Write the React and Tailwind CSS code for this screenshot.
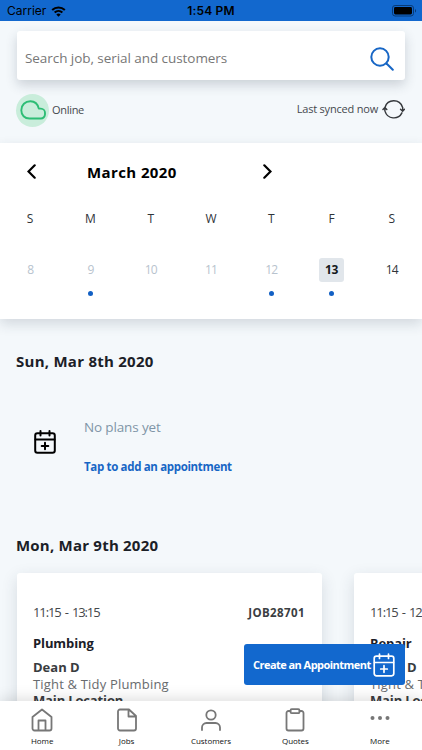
import React from "react";

const days = [
  { w: "S", d: "8" },
  { w: "M", d: "9", dot: true },
  { w: "T", d: "10" },
  { w: "W", d: "11" },
  { w: "T", d: "12", dot: true },
  { w: "F", d: "13", dot: true, today: true },
  { w: "S", d: "14", active: true },
];

function CalendarPlus({ className, strokeWidth = 2 }) {
  return (
    <svg viewBox="0 0 22 24" className={className} fill="none" stroke="currentColor" strokeWidth={strokeWidth} strokeLinecap="round" strokeLinejoin="round">
      <rect x="1.2" y="3.2" width="19.6" height="19.6" rx="2.2" />
      <path d="M1.5 9.5h19M6.5 1v4.5M15.5 1v4.5M11 12.7v6.6M7.7 16h6.6" />
    </svg>
  );
}

function StatusBar() {
  return (
    <div className="grid h-[21px] shrink-0 grid-cols-3 items-center bg-[#1268ce] px-[7px] pt-[1px] font-['Inter',sans-serif] text-black">
      <div className="flex items-center gap-[5px]">
        <span className="text-[12px] leading-none">Carrier</span>
        <svg viewBox="0 0 16 12" className="h-[11px] w-[15px]" fill="currentColor">
          <path d="M8 11.7 5.6 9.2a3.5 3.5 0 0 1 4.8 0Z" />
          <path d="M3.8 7.1a6.1 6.1 0 0 1 8.4 0M1.1 4.3a10 10 0 0 1 13.8 0" fill="none" stroke="currentColor" strokeWidth="2.2" />
        </svg>
      </div>
      <div className="text-center text-[12px] leading-none font-semibold tracking-[0.2px]">1:54 PM</div>
      <div className="flex items-center justify-end">
        <svg viewBox="0 0 25 12" className="-mr-[2px] h-[12px] w-[25px]">
          <rect x="0.5" y="0.5" width="21" height="10.5" rx="2.6" fill="none" stroke="#083a75" />
          <rect x="2" y="2" width="18" height="7.5" rx="1.4" />
          <path d="M23 4v3.6c1.4-.5 1.4-3.1 0-3.6Z" fill="#083a75" />
        </svg>
      </div>
    </div>
  );
}

function SearchCard() {
  return (
    <div className="mx-[17px] mt-[10px] flex h-[49px] shrink-0 items-center justify-between rounded-[3px] bg-white pr-[11px] pl-[8px] shadow-[0_5px_12px_rgba(40,55,75,0.2)]">
      <span className="mt-[5px] text-[13.5px] leading-[20px] tracking-[-0.06px] whitespace-nowrap text-[#777]">Search job, serial and customers</span>
      <svg viewBox="0 0 24 24" className="mt-[7px] size-[24px]" fill="none" stroke="#1766c5" strokeWidth="2" strokeLinecap="round">
        <circle cx="10" cy="10" r="8.7" />
        <path d="m16.5 16.5 6.3 6.3" />
      </svg>
    </div>
  );
}

function SyncRow() {
  return (
    <div className="mt-[14px] flex h-[33px] shrink-0 items-center justify-between pr-[17px] pl-[16px] text-[11px] leading-[16px] text-[#45494e]">
      <div className="flex items-center gap-[3px]">
        <div className="flex size-[33px] items-center justify-center rounded-full bg-[#c9eddb]">
          <svg viewBox="0 0 26 20" className="mb-[2px] h-[20px] w-[26px]" fill="none" stroke="#2dbd75" strokeWidth="1.9" strokeLinejoin="round">
            <path d="M9.500 18.500h11.300a4.200 4.200 0 0 0 4.200-4.300v-1.400a4.200 4.200 0 0 0-4.200-4.200H18.800C17.800 4.200 14.600 1.200 10.400 1.200 5.200 1.200 1.300 5.100 1.300 10.200c0 5 3.400 8.300 8.200 8.300Z" />
          </svg>
        </div>
        <span className="mb-[2px] tracking-[-0.3px]">Online</span>
      </div>
      <div className="mb-[3px] flex items-center gap-[4px]">
        <span className="tracking-[-0.2px] whitespace-nowrap">Last synced now</span>
        <svg viewBox="0 0 24 22" className="h-[22px] w-[23px]" fill="none" stroke="#35383c" strokeWidth="1.5" strokeLinecap="round" strokeLinejoin="round">
          <path d="M3 13V10.200M3.200 9.200A9.500 9.500 0 0 1 21.300 9M21.600 9.500V12.800M1 11.500l2-2 2 2M19.400 11.300l2.100 2 2-2M3.200 13.500A9.500 9.500 0 0 0 20.800 15" />
        </svg>
      </div>
    </div>
  );
}

function Calendar() {
  return (
    <div className="relative mt-[16px] flex h-[176px] shrink-0 flex-col bg-white shadow-[0_5px_12px_rgba(40,55,75,0.16)]">
      <div className="flex h-[57px] items-center pl-[27px]">
        <svg viewBox="0 0 9 15" className="h-[15px] w-[9px]" fill="none" stroke="black" strokeWidth="2.200" strokeLinecap="round">
          <path d="M7.700 1.300 1.500 7.500l6.200 6.200" />
        </svg>
        <span className="ml-[51px] w-[176px] text-[15px] leading-[20px] font-bold tracking-[0.4px] whitespace-nowrap text-black">March 2020</span>
        <svg viewBox="0 0 9 15" className="h-[15px] w-[9px]" fill="none" stroke="black" strokeWidth="2.200" strokeLinecap="round">
          <path d="m1.300 1.300 6.200 6.200-6.200 6.200" />
        </svg>
      </div>
      <div className="grid grid-cols-7 text-center text-[12px] leading-[16px]">
        {days.map((day, i) => (
          <div key={i} className="flex flex-col items-center">
            <span className="mt-[11px] text-[#2f3439]">{day.w}</span>
            <span
              className={
                day.today
                  ? "mt-[31px] flex h-[24px] w-[25px] items-center justify-center rounded-[3px] bg-[#e1e6eb] font-bold tracking-[-0.4px] text-[#15191d]"
                  : day.active
                    ? "mt-[31px] flex h-[24px] w-[25px] items-center justify-center tracking-[-0.8px] text-[#2f3439]"
                    : "mt-[31px] flex h-[24px] w-[25px] items-center justify-center tracking-[-0.9px] text-[#b8c3ce]"
              }
            >
              {day.d}
            </span>
            {day.dot && <span className="mt-[9px] size-[5px] rounded-full bg-[#1260c4]" />}
          </div>
        ))}
      </div>
    </div>
  );
}

function JobCard({ time, job, type }) {
  return (
    <div className="h-[200px] w-[305px] shrink-0 rounded-[3px] bg-white px-[16px] pt-[30px] shadow-[0_5px_16px_rgba(40,55,75,0.15)]">
      <div className="flex h-[20px] items-center justify-between pr-[1px]">
        <span className="text-[13px] tracking-[-1.1px] whitespace-nowrap text-[#44474a] [word-spacing:1.8px]">{time}</span>
        <span className="text-[11.500px] font-bold tracking-[0.4px] text-[#3b3e42]">{job}</span>
      </div>
      <div className="mt-[10px] text-[13px] leading-[20px] font-bold tracking-[-0.1px] text-[#1b2027]">{type}</div>
      <div className="mt-[5px] text-[13px] leading-[18px] font-bold text-[#393c40]">Dean D</div>
      <div className="text-[13px] leading-[16px] tracking-[0.18px] text-[#686b6e]">Tight &amp; Tidy Plumbing</div>
      <div className="text-[13px] leading-[16px] font-bold tracking-[-0.15px] text-[#393c40]">Main Location</div>
    </div>
  );
}

const iconProps = { fill: "none", stroke: "#777", strokeWidth: 1.8, strokeLinecap: "round", strokeLinejoin: "round" };

const tabs = [
  {
    label: "Home",
    icon: (
      <svg viewBox="0 0 22 24" className="h-[24px] w-[22px]" {...iconProps}>
        <path d="M1.500 9 11 1.500 20.500 9v11.500a2 2 0 0 1-2 2h-15a2 2 0 0 1-2-2ZM7.500 22V12.500h7V22" />
      </svg>
    ),
  },
  {
    label: "Jobs",
    icon: (
      <svg viewBox="0 0 22 24" className="h-[24px] w-[22px]" {...iconProps}>
        <path d="M4 1.500h9l7 6.500v12.500a2 2 0 0 1-2 2H4a2 2 0 0 1-2-2v-17a2 2 0 0 1 2-2ZM12.500 1.800V8.500h7" />
      </svg>
    ),
  },
  {
    label: "Customers",
    icon: (
      <svg viewBox="0 0 22 24" className="h-[24px] w-[22px]" {...iconProps}>
        <circle cx="11" cy="7" r="4.700" />
        <path d="M2 22v-2.500a4.500 4.500 0 0 1 4.500-4.500h9a4.500 4.500 0 0 1 4.500 4.500V22" />
      </svg>
    ),
  },
  {
    label: "Quotes",
    icon: (
      <svg viewBox="0 0 22 24" className="h-[24px] w-[22px]" {...iconProps}>
        <path d="M6.500 3H4.500a2 2 0 0 0-2 2v15.500a2 2 0 0 0 2 2h13a2 2 0 0 0 2-2V5a2 2 0 0 0-2-2h-2" />
        <rect x="6.500" y="1.200" width="9" height="4" rx="1.200" />
      </svg>
    ),
  },
  {
    label: "More",
    icon: (
      <svg viewBox="0 0 22 24" className="h-[24px] w-[22px]" fill="#777">
        <circle cx="3.500" cy="10" r="2" />
        <circle cx="11" cy="10" r="2" />
        <circle cx="18.500" cy="10" r="2" />
      </svg>
    ),
  },
];

export default function App() {
  return (
    <div className="relative flex h-[750px] w-[422px] flex-col overflow-hidden bg-[#f4f8fb] font-['Open_Sans',sans-serif]">
      <StatusBar />
      <SearchCard />
      <SyncRow />
      <Calendar />
      <div className="flex min-h-0 flex-1 flex-col overflow-hidden">
        <h2 className="mt-[31px] ml-[16px] shrink-0 text-[15px] leading-[22px] font-bold tracking-[0.26px] text-[#1b2027]">Sun, Mar 8th 2020</h2>
        <div className="mt-[45px] flex h-[60px] shrink-0 items-start pl-[34px]">
          <CalendarPlus className="mt-[13px] h-[24px] w-[22px] text-black" />
          <div className="ml-[28px] flex flex-col gap-[21px]">
            <span className="text-[13.500px] leading-[20px] tracking-[-0.14px] text-[#7f95a7]">No plans yet</span>
            <span className="text-[11.500px] leading-[18px] font-bold tracking-[-0.34px] text-[#1766c5]">Tap to add an appointment</span>
          </div>
        </div>
        <h2 className="mt-[57px] ml-[16px] shrink-0 text-[15px] leading-[22px] font-bold tracking-[0.22px] text-[#1b2027]">Mon, Mar 9th 2020</h2>
        <div className="mt-[17px] flex gap-[32px] pl-[17px]">
          <JobCard time="11:15 - 13:15" job="JOB28701" type="Plumbing" />
          <JobCard time="11:15 - 12:15" job="JOB28702" type="Repair" />
        </div>
      </div>
      <button className="absolute top-[644px] left-[244px] flex h-[41px] w-[161px] items-center justify-between rounded-[3px] bg-[#1268ce] pr-[10px] pl-[9px] text-white">
        <span className="w-[118px] text-left text-[11px] leading-[16px] font-bold tracking-[-0.54px] whitespace-nowrap">Create an Appointment</span>
        <CalendarPlus className="h-[24px] w-[22px] shrink-0" strokeWidth={1.700} />
      </button>
      <nav className="relative grid h-[49px] shrink-0 grid-cols-5 bg-white shadow-[0_-2px_14px_rgba(0,0,0,0.14)]">
        {tabs.map((tab) => (
          <div key={tab.label} className="flex flex-col items-center pt-[7px]">
            {tab.icon}
            <span className="mt-[3px] text-[8px] leading-[11px] tracking-[-0.05px] text-[#111]">{tab.label}</span>
          </div>
        ))}
      </nav>
    </div>
  );
}
